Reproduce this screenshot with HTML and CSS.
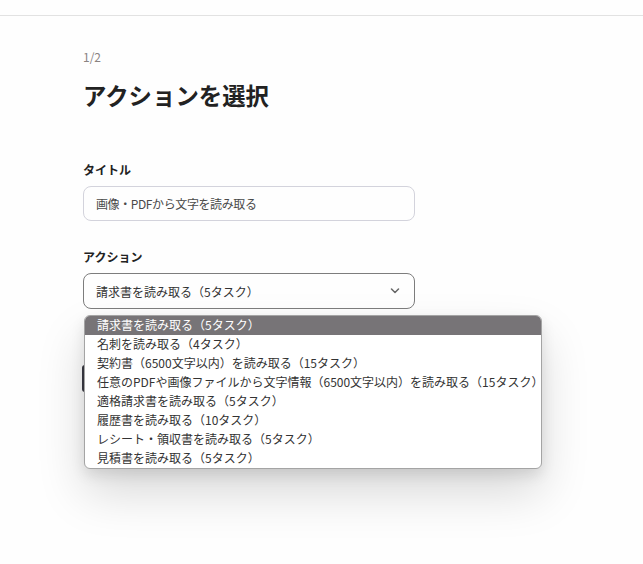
FILE: index.html
```html
<!DOCTYPE html>
<html lang="ja">
<head>
<meta charset="utf-8">
<title>アクションを選択</title>
<link rel="stylesheet" href="styles.css">
</head>
<body>
<div class="topbar"></div>
<main class="main">
  <div class="step">1/2</div>
  <h1 class="title">アクションを選択</h1>
  <div class="field">
    <label class="label">タイトル</label>
    <div class="input">画像・PDFから文字を読み取る</div>
  </div>
  <div class="field field-action">
    <label class="label">アクション</label>
    <div class="select-wrap">
      <div class="select">
        <span>請求書を読み取る（5タスク）</span>
        <svg class="chev" width="10" height="6" viewBox="0 0 10 6"><path d="M1.5 1l3.5 3.5 3.5-3.5" fill="none" stroke="#666" stroke-width="1.5" stroke-linecap="round" stroke-linejoin="round"/></svg>
      </div>
      <ul class="menu">
        <li class="opt selected">請求書を読み取る（5タスク）</li>
        <li class="opt">名刺を読み取る（4タスク）</li>
        <li class="opt">契約書（6500文字以内）を読み取る（15タスク）</li>
        <li class="opt">任意のPDFや画像ファイルから文字情報（6500文字以内）を読み取る（15タスク）</li>
        <li class="opt">適格請求書を読み取る（5タスク）</li>
        <li class="opt">履歴書を読み取る（10タスク）</li>
        <li class="opt">レシート・領収書を読み取る（5タスク）</li>
        <li class="opt">見積書を読み取る（5タスク）</li>
      </ul>
    </div>
  </div>
  <div class="next" aria-label="次へ"></div>
</main>
</body>
</html>
```

FILE: styles.css
```css
html, body {
  margin: 0;
  padding: 0;
  background: #fefefe;
  font-family: "Noto Sans CJK JP", "Noto Sans", sans-serif;
  color: #222;
}
body {
  min-height: 564px;
}
.topbar {
  height: 15px;
  border-bottom: 1px solid #e2e2e2;
}
.main {
  padding-left: 83px;
  padding-bottom: 160px;
  width: 332px;
}
.step {
  margin-top: 33px;
  font-size: 12px;
  line-height: 16px;
  color: #8a8382;
}
.title {
  margin: 14px 0 0;
  font-size: 23.4px;
  line-height: 32px;
  font-weight: 700;
  color: #222;
}
.field {
  margin-top: 50px;
  display: flex;
  flex-direction: column;
}
.field-action {
  margin-top: 27px;
}
.label {
  font-size: 12px;
  line-height: 18px;
  font-weight: 700;
  color: #222;
  margin-bottom: 7px;
}
.input {
  box-sizing: border-box;
  height: 35px;
  border: 1px solid #d3d3dc;
  border-radius: 8px;
  padding: 0 12px;
  display: flex;
  align-items: center;
  font-size: 12px;
  letter-spacing: -0.4px;
  color: #4a4a4a;
}
.select-wrap {
  position: relative;
}
.select {
  box-sizing: border-box;
  height: 36px;
  border: 1px solid #7d7d7d;
  border-radius: 8px;
  padding: 0 14px 0 12px;
  display: flex;
  align-items: center;
  justify-content: space-between;
  font-size: 12px;
  color: #333;
}
.menu {
  position: absolute;
  top: 42px;
  left: 1px;
  width: 458px;
  box-sizing: border-box;
  margin: 0;
  padding: 0;
  list-style: none;
  background: #fff;
  border: 1px solid #a4a4a4;
  border-radius: 6px;
  overflow: hidden;
  box-shadow: 0 24px 48px rgba(0, 0, 0, 0.15), 0 6px 14px rgba(0, 0, 0, 0.1);
  z-index: 2;
}
.opt {
  height: 19px;
  line-height: 17px;
  padding: 0 0 2px 12px;
  box-sizing: border-box;
  font-size: 12px;
  color: #333;
  white-space: nowrap;
}
.opt.selected {
  background: #777477;
  color: #fff;
}
.next {
  margin-top: 56px;
  margin-left: -1px;
  width: 100px;
  height: 27px;
  border-radius: 3px;
  background: #3b3b45;
}
```
